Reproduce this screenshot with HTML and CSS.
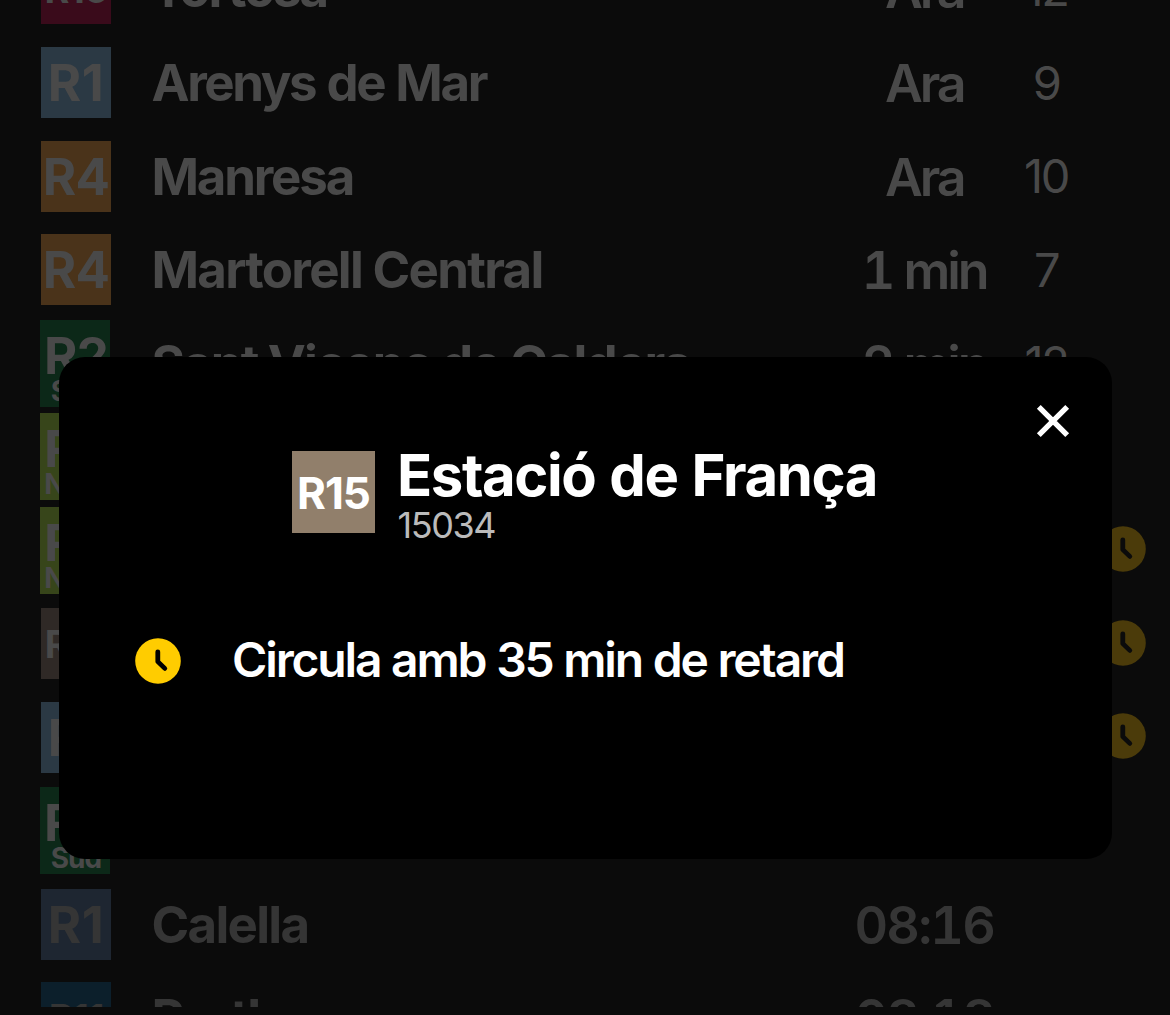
FILE: index.html
```html
<!DOCTYPE html>
<html lang="ca">
<head>
<meta charset="utf-8">
<title>Sortides</title>
<link rel="stylesheet" href="styles.css">
</head>
<body>
<svg width="0" height="0" class="defs">
  <symbol id="clock" viewBox="0 0 46 46">
    <circle cx="23" cy="23" r="22.8" fill="currentColor"/>
    <path d="M22.8 13.8V23.6L29.8 30.4" fill="none" stroke="var(--hand)" stroke-width="4.8" stroke-linecap="round" stroke-linejoin="round"/>
  </symbol>
</svg>
<main class="board">
  <div class="row"><span class="badge r16 three">R16</span><span class="dest">Tortosa</span><span class="time ara">Ara</span><span class="track">12</span></div>
  <div class="row"><span class="badge r1 one">R1</span><span class="dest arenys">Arenys de Mar</span><span class="time ara">Ara</span><span class="track">9</span></div>
  <div class="row"><span class="badge r4">R4</span><span class="dest">Manresa</span><span class="time ara">Ara</span><span class="track">10</span></div>
  <div class="row"><span class="badge r4">R4</span><span class="dest martorell">Martorell Central</span><span class="time">1 min</span><span class="track">7</span></div>
  <div class="row"><span class="badge r2s tall">R2<small>Sud</small></span><span class="dest sant">Sant Vicenç de Calders</span><span class="time">2 min</span><span class="track">12</span></div>
  <div class="row"><span class="badge r2n tall">R2<small>Nord</small></span></div>
  <div class="row"><span class="badge r2n tall">R2<small>Nord</small></span><svg class="alert"><use href="#clock"/></svg></div>
  <div class="row"><span class="badge r15 three">R15</span><svg class="alert"><use href="#clock"/></svg></div>
  <div class="row"><span class="badge r1 one">R1</span><svg class="alert"><use href="#clock"/></svg></div>
  <div class="row"><span class="badge r2s tall">R2<small>Sud</small></span></div>
  <div class="row later"><span class="badge r1 one">R1</span><span class="dest martorell">Calella</span><span class="time clocktime">08:16</span></div>
  <div class="row later"><span class="badge r11 three">R11</span><span class="dest">Portbou</span><span class="time clocktime">08:18</span></div>
</main>
<section class="modal">
  <button class="close" aria-label="Tanca"><svg width="34" height="34" viewBox="0 0 34 34"><path d="M2.8 2.8L31.2 31.2M31.2 2.8L2.8 31.2" stroke="#fff" stroke-width="5.4"/></svg></button>
  <header class="head">
    <span class="line">R15</span>
    <div>
      <h1 class="title">Estació de França</h1>
      <p class="number">15034</p>
    </div>
  </header>
  <div class="notice">
    <svg class="notice-icon"><use href="#clock"/></svg>
    <p class="notice-text">Circula amb 35 min de retard</p>
  </div>
</section>
</body>
</html>
```
FILE: styles.css
```css
* { box-sizing: border-box; }
body { margin: 0; height: 1015px; overflow: hidden; position: relative; background: #0b0b0b; font-family: Inter, "Liberation Sans", sans-serif; }
.defs { position: absolute; }
h1, p { margin: 0; }

.board { height: 1007px; overflow: hidden; color: #494949; }
.row { height: 93.55px; padding-left: 41px; display: grid; grid-template-columns: 110.5px 672px 201.5px 42px 111px; align-items: center; white-space: nowrap; }
.row:first-child { margin-top: -57.8px; }
.later { color: #353535; }

.badge { width: 70px; height: 71px; display: flex; flex-direction: column; align-items: center; justify-content: center; font-size: 51px; font-weight: 700; line-height: 1; letter-spacing: -0.8px; }
.one { letter-spacing: 0.5px; }
.three { font-size: 38px; letter-spacing: -1px; }
.tall { height: 87px; margin-left: -1px; justify-content: flex-start; padding: 14px 0 0 2px; line-height: 43px; }
.tall small { font-size: 28px; line-height: 28px; letter-spacing: -0.9px; }
.r16 { background: #3a0b1b; }
.r1 { background: #2b3944; }
.r4 { background: #4a331a; }
.r2s { background: #0c2818; }
.r2n { background: #37451a; }
.r15 { background: #2f2926; }
.r11 { background: #0c1f2b; }
.later .r1 { background: #1e2631; }

.dest { font-size: 51px; font-weight: 700; line-height: 60px; letter-spacing: -2.2px; padding-top: 1px; }
.martorell { letter-spacing: -1.7px; }
.sant { letter-spacing: -1.85px; }
.arenys { letter-spacing: -2.4px; word-spacing: 1.5px; }
.time { grid-column: 3; text-align: center; font-size: 52px; font-weight: 600; line-height: 60px; letter-spacing: -3px; font-feature-settings: "tnum"; padding-top: 3px; }
.ara { letter-spacing: -3.2px; }
.clocktime { letter-spacing: -1.8px; }
.track { grid-column: 4; display: flex; justify-content: center; font-size: 47px; line-height: 60px; letter-spacing: -2.4px; font-weight: 400; }
.alert { grid-column: 5; justify-self: center; width: 46px; height: 46px; margin-bottom: 2px; color: #4b3b0a; --hand: #0b0b0b; }

.modal { position: absolute; left: 59px; top: 357px; width: 1053px; height: 502px; border-radius: 26px; background: #000; color: #fff; }
.close { position: absolute; right: 42px; top: 47px; width: 34px; height: 34px; padding: 0; border: 0; background: none; }
.close svg { display: block; }
.head { display: flex; padding: 88px 0 0 233px; white-space: nowrap; }
.line { width: 83px; height: 82px; margin: 6px 22px 0 0; background: #917f6b; display: flex; align-items: center; justify-content: center; padding-top: 2px; font-size: 44px; font-weight: 700; letter-spacing: -1px; }
.title { font-size: 58px; line-height: 60px; font-weight: 700; letter-spacing: -1.4px; word-spacing: 1.5px; }
.number { font-size: 36px; line-height: 40px; font-weight: 400; letter-spacing: -1.4px; padding-left: 0.5px; color: #bbb; }
.notice { display: flex; align-items: center; padding: 92px 0 0 75.5px; white-space: nowrap; }
.notice-icon { width: 46px; height: 46px; margin-right: 51.5px; color: #fc0; --hand: #000; }
.notice-text { font-size: 48px; line-height: 46px; font-weight: 600; letter-spacing: -2.15px; word-spacing: 0.8px; padding-bottom: 1px; }
```
